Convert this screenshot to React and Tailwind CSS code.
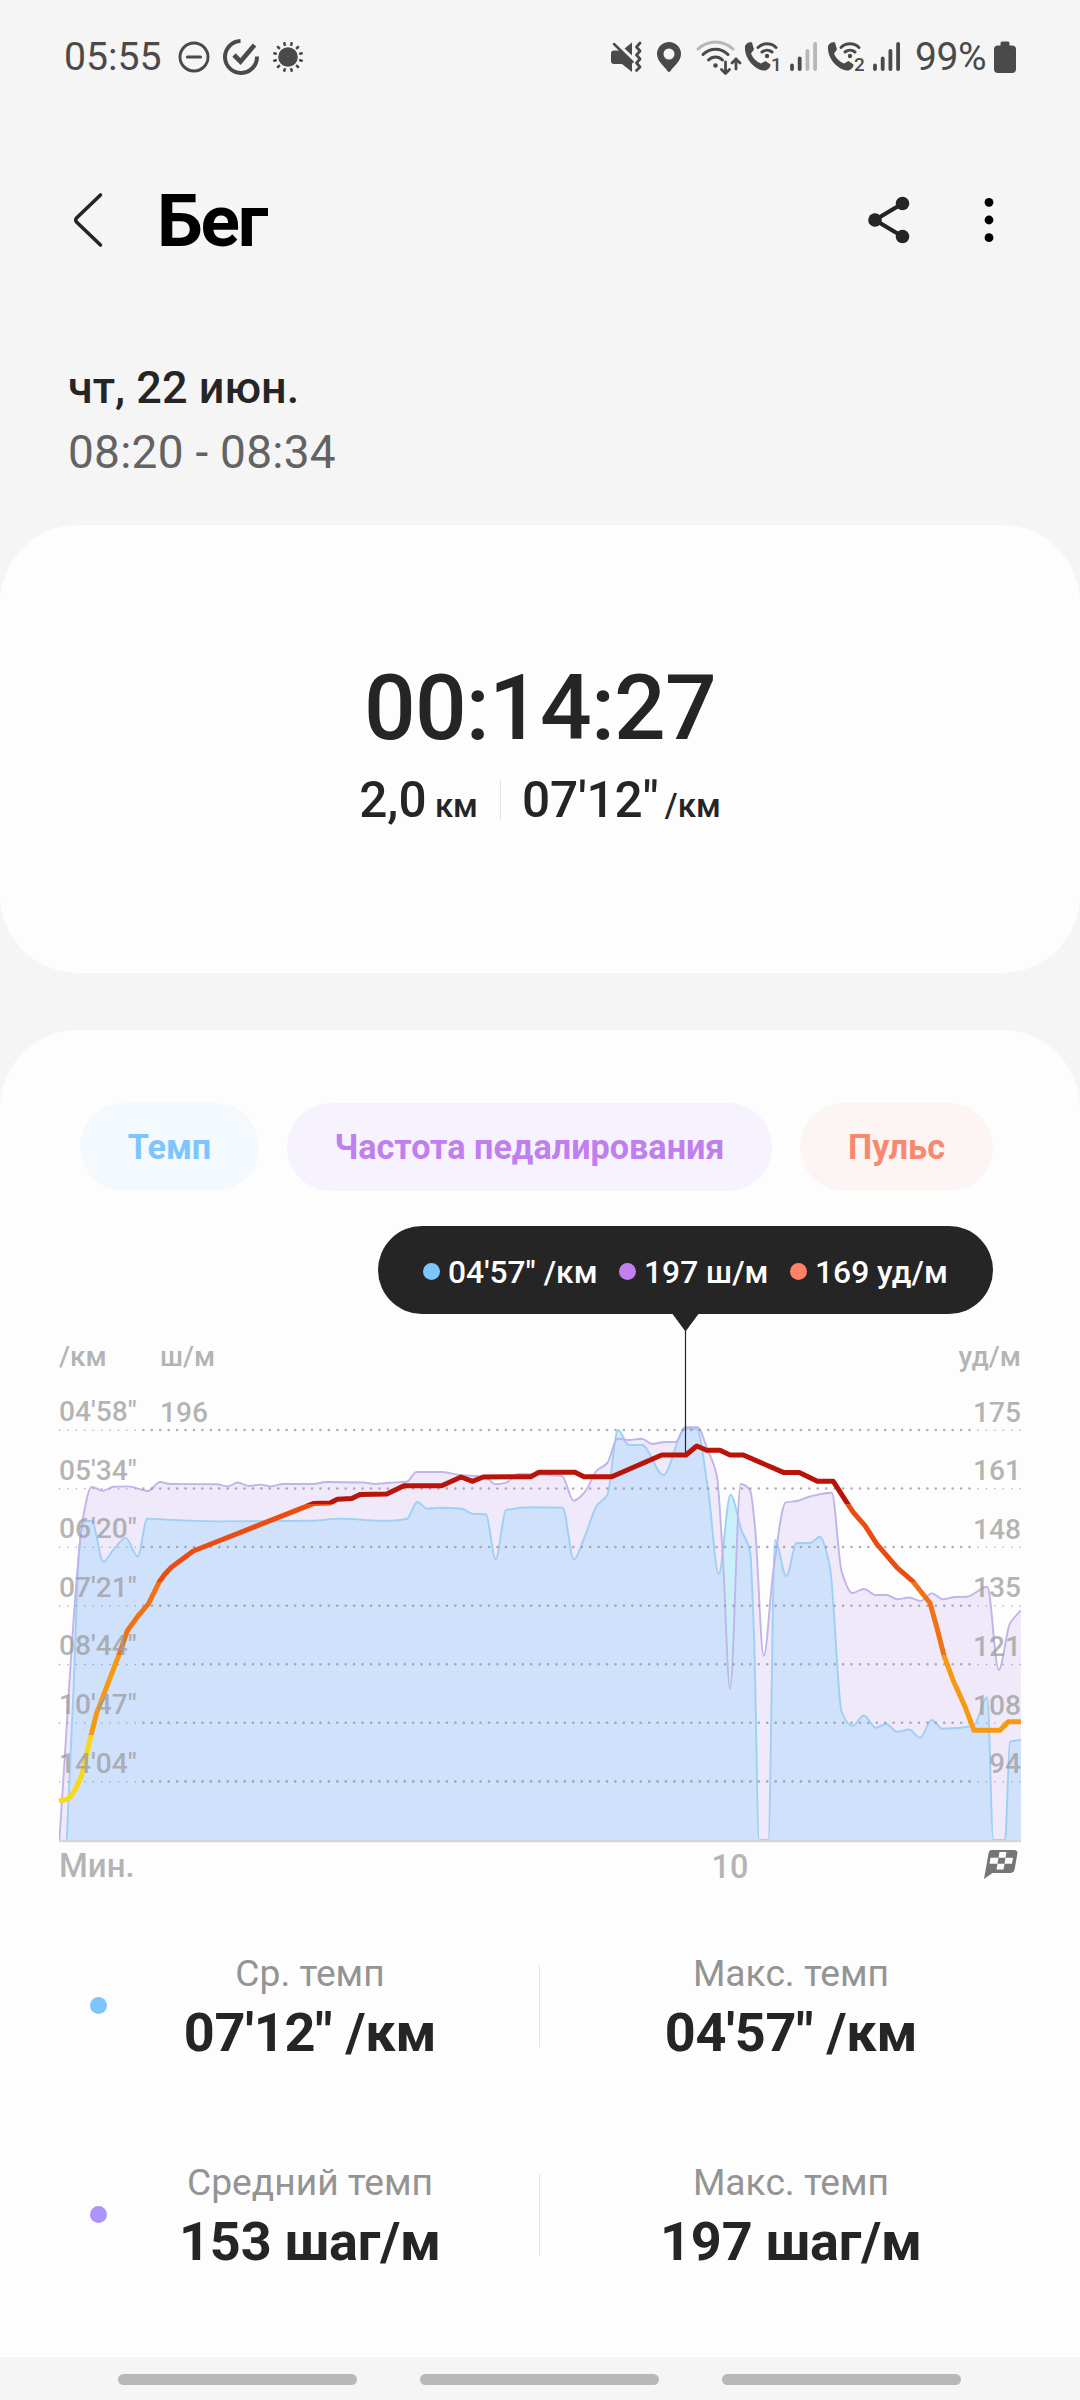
const GRID_Y = [1430, 1488.5, 1547, 1605.7, 1664.3, 1722.8, 1781.4];
const PACE_LABELS = ["04'58\"", "05'34\"", "06'20\"", "07'21\"", "08'44\"", "10'47\"", "14'04\""];
const PULSE_LABELS = ["175", "161", "148", "135", "121", "108", "94"];
const BASE_Y = 1840;

const PACE = [
  [66.7, 1840], [73.3, 1695], [79.3, 1548.6], [83.3, 1521.8], [91.7, 1520.7], [103.3, 1561.8], [113.3, 1550],
  [125.7, 1537.9], [137.7, 1556.4], [147.3, 1518.6], [173.3, 1520], [223, 1521.4], [313, 1520.7], [340, 1518.6],
  [380, 1520.7], [390, 1520.7], [406.7, 1519], [417.3, 1502], [427.3, 1508.7], [440, 1507.7], [461.7, 1508.7],
  [472.7, 1513.7], [485.7, 1514.3], [495.7, 1559.3], [506, 1510], [533, 1507.3], [562.7, 1507.7], [573.7, 1559.3],
  [585, 1536], [596.7, 1505.7], [607.3, 1495], [618, 1430], [628.7, 1445], [642, 1445], [663.3, 1475], [685, 1429],
  [696.7, 1429], [708.3, 1491.7], [718.7, 1574.3], [730.5, 1494.6], [741.7, 1530.9], [750, 1551], [754.3, 1645.6],
  [759, 1840], [768.3, 1840], [775, 1540], [786.3, 1576], [796.7, 1543], [810, 1543], [820, 1536.8], [830, 1567.9],
  [841.7, 1712], [852.3, 1726], [864, 1715.5], [875.7, 1727.7], [886, 1724], [897.3, 1731.8], [909, 1729.5],
  [920, 1737.7], [931.7, 1720], [942.3, 1728.8], [973.3, 1726], [987.3, 1697.4], [993.3, 1840], [1005, 1840],
  [1010, 1741.8], [1021, 1740],
];

const CADENCE = [
  [59.3, 1840], [82.7, 1520], [91.7, 1487], [103.3, 1490.7], [113.3, 1486.8], [128, 1486.4], [148, 1491],
  [160, 1482], [170, 1484], [216.7, 1484.3], [227.7, 1486.4], [237.7, 1482.5], [249, 1486], [260.7, 1484.6],
  [270.7, 1486.4], [283, 1484], [313, 1484], [326.7, 1482], [363, 1482.5], [375, 1484], [390, 1482.7],
  [406.7, 1481.7], [416.7, 1472], [441.7, 1472], [460, 1475], [485, 1477], [495.7, 1484.3], [506, 1482.7],
  [518, 1474], [561.7, 1475.7], [573.7, 1500.7], [585, 1491.7], [596.7, 1470.7], [607.3, 1463], [617.3, 1438.7],
  [628.7, 1440], [641.7, 1438.7], [652, 1444], [665, 1442], [675.7, 1442], [685, 1427.3], [697.3, 1427.3],
  [708.3, 1451.7], [716.7, 1475], [723, 1560], [730, 1689], [740.7, 1484], [750, 1490], [755, 1527],
  [763.7, 1656], [773.3, 1571.6], [785.7, 1502.4], [797.3, 1501], [810, 1496.5], [831.7, 1492.8], [841.7, 1571.6],
  [852.3, 1593], [864, 1589], [875.7, 1595], [886.7, 1595], [897.3, 1599.3], [909, 1597.5], [920.7, 1601],
  [931.7, 1593.4], [943, 1599.3], [955, 1597], [966.7, 1596.7], [987.3, 1586.7], [998.7, 1670], [1010, 1623.4],
  [1021, 1610.4],
];

const PULSE = [
  [59, 1800.4], [65, 1800], [70, 1797.5], [76, 1788], [81.7, 1775.4], [91, 1735.4], [96.7, 1712.9], [119.3, 1654],
  [127.3, 1630.7], [137.7, 1616.4], [148.3, 1604], [159.3, 1581.8], [165, 1574], [171.7, 1567], [193.3, 1551],
  [313.3, 1503.6], [330, 1502.9], [337.3, 1499.3], [351.7, 1498.6], [360, 1494.6], [386.7, 1494], [404, 1485.7],
  [441.7, 1485.7], [461, 1477], [472.7, 1481.3], [483.3, 1477], [530.7, 1476.7], [539, 1472.3], [575, 1472.3],
  [584, 1476.7], [611.7, 1476.7], [661.7, 1455], [686, 1455], [696.7, 1446], [706.7, 1450.3], [720, 1450.3],
  [730, 1455], [743.3, 1455], [783.3, 1472.4], [799.3, 1472.4], [817.3, 1481.3], [833.3, 1481.3], [847.7, 1503.9],
  [853.3, 1512.4], [865, 1525.7], [876.7, 1543.8], [897.3, 1567.9], [912.3, 1580.8], [930, 1603], [936.7, 1627],
  [944.3, 1656.7], [953.3, 1680.7], [965, 1706.6], [974, 1730.3], [1000, 1730.3], [1008.3, 1721.8], [1021, 1721.8],
];

// heart rate zones, from top to bottom of the chart
const ZONES = [
  [1420, 1503.7, "#b81409"],
  [1503.7, 1581.5, "#ea4c12"],
  [1581.5, 1655.5, "#f17216"],
  [1655.5, 1735, "#f59a12"],
  [1735, 1820, "#f7d916"],
];

// monotone cubic curve through the points
function curve(points) {
  const n = points.length;
  const slope = [];
  for (let i = 0; i < n - 1; i++) {
    slope.push((points[i + 1][1] - points[i][1]) / (points[i + 1][0] - points[i][0]));
  }
  const tangent = points.map((_, i) => {
    if (i === 0) return slope[0];
    if (i === n - 1) return slope[n - 2];
    const a = slope[i - 1];
    const b = slope[i];
    return a * b <= 0 ? 0 : (2 * a * b) / (a + b);
  });
  let d = `M${points[0][0]} ${points[0][1]}`;
  for (let i = 0; i < n - 1; i++) {
    const [x0, y0] = points[i];
    const [x1, y1] = points[i + 1];
    const h = (x1 - x0) / 3;
    d += `C${(x0 + h).toFixed(1)} ${(y0 + tangent[i] * h).toFixed(1)} ${(x1 - h).toFixed(1)} ${(y1 - tangent[i + 1] * h).toFixed(1)} ${x1} ${y1}`;
  }
  return d;
}

const area = (points) => `${curve(points)}V${BASE_Y}H${points[0][0]}Z`;

function WifiCall({ sim }) {
  return (
    <svg width="37" height="34" viewBox="0 0 37 34" className="text-[#4a4a4a]">
      <path d="M1 6c1.500-3 4-4.500 7-3.500l2 7-3 4c2 5 6 8.500 10 10l4.500-2.500 5 3.500c0 3-3 6.500-7 6C10 29 0 18 1 6z" fill="currentColor" />
      <g fill="none" stroke="currentColor" strokeWidth="3" strokeLinecap="round">
        <path d="M14 7.500c5-5 13-5 18 0" />
        <path d="M18 12c3-2.500 7-2.500 10 0" />
      </g>
      <circle cx="23" cy="16" r="2.200" fill="currentColor" />
      <text x="27" y="31" fontSize="19" fontWeight="500" fill="currentColor" stroke="#f5f5f5" strokeWidth="3" paintOrder="stroke">
        {sim}
      </text>
    </svg>
  );
}

function Signal({ level }) {
  return (
    <svg width="28" height="34" viewBox="0 0 28 34" fill="none" strokeWidth="3.800" strokeLinecap="round">
      {[25.5, 18.5, 11, 4].map((top, i) => (
        <path key={top} d={`M${2 + i * 7.7} ${top}V29`} stroke={i < level ? "#4a4a4a" : "#b7b7b7"} />
      ))}
    </svg>
  );
}

function StatusBar() {
  return (
    <div className="flex h-28 items-center pl-16 pr-16 pt-px text-[39.2px] text-[#4a4a4a]">
      <span className="pt-0.5">05:55</span>
      <svg width="32" height="32" viewBox="0 0 32 32" className="ml-4" fill="none" stroke="currentColor" strokeWidth="2.900">
        <circle cx="16" cy="16" r="14" />
        <path d="M9.500 16h13" strokeWidth="3.200" strokeLinecap="round" />
      </svg>
      <svg width="38" height="38" viewBox="0 0 38 38" className="ml-3" fill="none" stroke="currentColor" strokeWidth="4">
        <path d="M18.500 3A16 16 0 1 0 35 18.500" />
        <path d="M12 17l6.500 6.500L32.500 7" strokeWidth="4.600" />
      </svg>
      <svg width="32" height="32" viewBox="0 0 32 32" className="ml-3" fill="currentColor">
        <circle cx="16" cy="16" r="9.800" />
        {[15, 45, 75, 105, 135, 165, 195, 225, 255, 285, 315, 345].map((a) => (
          <rect key={a} x="14.700" y="0.600" width="2.600" height="4" rx="1" transform={`rotate(${a} 16 16)`} />
        ))}
      </svg>

      <div className="ml-auto flex items-center">
        <svg width="31" height="32" viewBox="0 0 31 32" fill="currentColor">
          <path d="M13.500 7.500L21 1.500v13zM3 9.500h6L21 21v10l-10-8H3q-3 0-3-3v-7.500q0-3 3-3z" />
          <path d="M3 3l18.500 18" stroke="currentColor" strokeWidth="2.500" strokeLinecap="round" />
          <path d="M29 2l-3.500 4 3.500 4-3.500 4 3.500 4-3.500 4 3.500 4-3.500 3.500" fill="none" stroke="currentColor" strokeWidth="2.800" strokeLinecap="round" strokeLinejoin="round" />
        </svg>
        <svg width="26" height="32" viewBox="0 0 26 32" className="ml-[14px]" fill="currentColor">
          <path fillRule="evenodd" d="M13 1a12 12 0 0 1 12 12c0 7-7 12-10.500 17q-1.500 2-3 0C8 25 1 20 1 13A12 12 0 0 1 13 1zm0 6.500a5.500 5.500 0 1 0 0 11 5.500 5.500 0 0 0 0-11z" />
        </svg>
        <svg width="46" height="36" viewBox="0 0 46 36" className="ml-[14px]" fill="none" stroke="currentColor" strokeWidth="3" strokeLinecap="round">
          <path d="M2 10c10-9.500 25-9.500 35 0" stroke="#b7b7b7" />
          <path d="M7 15.500c7-7 18-7 25 0" />
          <path d="M12.500 21c4-4 10-4 14 0" />
          <circle cx="19.500" cy="26.500" r="2.300" fill="currentColor" stroke="none" />
          <path d="M29.500 23v11M25.500 30.500l4 4 4-4M40 30V20M36 24l4-4 4 4" strokeWidth="2.800" strokeLinejoin="round" />
        </svg>
        <div className="ml-[2px] flex items-center gap-[9px]">
          <WifiCall sim="1" />
          <Signal level={2} />
          <WifiCall sim="2" />
          <Signal level={4} />
        </div>
        <span className="ml-[14px] pt-0.5 text-[39px] leading-none tracking-[-0.5px]">99%</span>
        <svg width="22" height="32" viewBox="0 0 22 32" className="ml-[8px]" fill="currentColor">
          <path d="M6.500 3V2q0-1.500 1.500-1.500h6q1.500 0 1.500 1.500v2.500H18q4 0 4 4V28q0 4-4 4H4q-4 0-4-4V8.500q0-4 4-4h2.500z" />
        </svg>
      </div>
    </div>
  );
}

function Header() {
  return (
    <div className="flex h-[216px] items-center pl-[72px] pr-[83px]">
      <svg width="32" height="56" viewBox="0 0 32 56" fill="none" stroke="#252525" strokeWidth="3.600" strokeLinecap="round" strokeLinejoin="round">
        <path d="M28.500 3L4.500 26q-1.500 2 0 4l24 23" />
      </svg>
      <h1 className="ml-[53px] pt-[3px] text-[73px] font-bold leading-none tracking-[-2.2px] text-black">Бег</h1>
      <svg width="44" height="50" viewBox="0 0 44 50" className="ml-auto" fill="#252525" stroke="#252525">
        <path d="M35.500 8.500L8 25l27.500 16.500" fill="none" strokeWidth="4.200" />
        <g stroke="none">
          <circle cx="35.500" cy="8.500" r="6.800" />
          <circle cx="8" cy="25" r="6.800" />
          <circle cx="35.500" cy="41.500" r="6.800" />
        </g>
      </svg>
      <svg width="16" height="50" viewBox="0 0 16 50" className="ml-[70px]">
        <circle cx="8" cy="7.300" r="4.400" />
        <circle cx="8" cy="25" r="4.400" />
        <circle cx="8" cy="42.700" r="4.400" />
      </svg>
    </div>
  );
}

function Tooltip() {
  return (
    <div className="ml-[378px] mt-[35px] flex h-[88px] w-[615px] items-center rounded-full bg-[#252525] pl-[45px] pt-[3px] text-[31.8px] font-medium text-[#fcfcfc]">
      <i className="size-[17px] rounded-full bg-[#7cc5fd]" />
      <span className="ml-2 w-[171px] whitespace-nowrap pt-[3px]">04'57" /км</span>
      <i className="size-[17px] rounded-full bg-[#c27ff0]" />
      <span className="ml-2 w-[146px] whitespace-nowrap pt-[3px]">197 ш/м</span>
      <i className="size-[17px] rounded-full bg-[#fc836a]" />
      <span className="ml-2 whitespace-nowrap pt-[3px]">169 уд/м</span>
    </div>
  );
}

function Chart() {
  return (
    <svg width="1080" height="577" viewBox="0 1314 1080 577" className="block">
      <defs>
        <linearGradient id="zones" gradientUnits="userSpaceOnUse" x1="0" y1="1420" x2="0" y2="1820">
          {ZONES.flatMap(([from, to, color]) => [
            <stop key={`${color}-a`} offset={(from - 1420) / 400} stopColor={color} />,
            <stop key={`${color}-b`} offset={(to - 1420) / 400} stopColor={color} />,
          ])}
        </linearGradient>
        <clipPath id="plot">
          <rect x="59" y="1400" width="962" height="440" />
        </clipPath>
        <clipPath id="cadence">
          <path d={area(CADENCE)} />
        </clipPath>
      </defs>

      <g clipPath="url(#plot)">
        <path d={area(CADENCE)} fill="#efe9f9" />
        <path d={area(PACE)} fill="#cbeefb" />
        <path d={area(PACE)} fill="#d0e1fc" clipPath="url(#cadence)" />
        <path d={curve(PACE)} fill="none" stroke="#9dd0f4" strokeWidth="1.900" />
        <path d={curve(CADENCE)} fill="none" stroke="#c0b4ea" strokeWidth="1.900" />
      </g>

      {GRID_Y.map((y) => (
        <g key={y} stroke="#8b8b98" strokeOpacity="0.7" strokeLinecap="round" strokeDasharray="0 8.430">
          <path d={`M59.500 ${y + 0.3}H140`} strokeWidth="1.600" />
          <path d={`M143.400 ${y}H975`} strokeWidth="2.600" />
          <path d={`M978 ${y + 0.3}H1021`} strokeWidth="1.600" />
        </g>
      ))}
      <path d="M59 1841H1021" stroke="#d3d5da" strokeWidth="2.400" />

      <path d="M672.500 1314H698.500L685.500 1331.500Z" fill="#252525" />
      <path d="M685.500 1330V1455" stroke="#252525" strokeWidth="1.200" />
      <polyline points={PULSE.join(" ")} fill="none" stroke="url(#zones)" strokeWidth="5" strokeLinejoin="round" />

      <g fontSize="28.200" fontWeight="500" fill="#9c9c9c" fillOpacity="0.75">
        <text x="59" y="1366">/км</text>
        <text x="160" y="1366">ш/м</text>
        <text x="1021" y="1366" textAnchor="end">уд/м</text>
        <text x="160" y="1422">196</text>
        {PACE_LABELS.map((label, i) => (
          <text key={label} x="59" y={1421 + i * 58.6}>{label}</text>
        ))}
        {PULSE_LABELS.map((label, i) => (
          <text key={label} x="1021" y={1421.5 + i * 58.6} textAnchor="end">{label}</text>
        ))}
        <text x="59" y="1877" fontSize="33">Мин.</text>
        <text x="730" y="1877.500" fontSize="32.500" textAnchor="middle">10</text>
      </g>

      {/* finish flag */}
      <path d="M991.500 1850H1014q4 0 3.300 4l-2.600 15q-.700 4-4.500 4H992.500l-8.500 6 4.500-25.500q.600-3.500 3-3.500z" fill="#757575" />
      <path d="M999.500 1852h7l-1 5.700h-7zM990.500 1857.700h8l-1 6h-8zM1005.500 1857.700h7.500l-1 6h-7.500zM997.500 1863.700h7l-1 5.800h-7z" fill="#fcfcfc" />
    </svg>
  );
}

function Stat({ label, value }) {
  return (
    <div className="flex flex-col items-center whitespace-nowrap pt-[3px]">
      <span className="text-[37.2px] leading-[52px] text-[#949494]">{label}</span>
      <span className="text-[54px] font-bold leading-[68px] tracking-[-0.2px] text-[#252525]">{value}</span>
    </div>
  );
}

function StatRow({ color, left, right }) {
  return (
    <div className="grid h-[209px] grid-cols-[17px_406px_53px_450px] items-center pl-[90px]">
      <i className={`size-[17px] rounded-full ${color}`} />
      <Stat {...left} />
      <div className="mx-auto h-[82px] w-px bg-[#e3e3e3]" />
      <Stat {...right} />
    </div>
  );
}

export default function App() {
  return (
    <div className="flex h-[2400px] w-[1080px] flex-col overflow-hidden bg-[#f5f5f5] font-[Roboto,sans-serif] text-[#252525]">
      <StatusBar />
      <Header />

      <div className="h-[197px] pl-[68px] pt-[28px] text-[45px] leading-[64px]">
        <p className="font-medium">чт, 22 июн.</p>
        <p className="text-[46px] tracking-[0.25px] text-[#636363]">08:20 - 08:34</p>
      </div>

      <section className="flex h-[448px] flex-col items-center rounded-[78px] bg-[#fdfdfd] pt-[127px]">
        <p className="text-[91px] font-medium leading-[112px] tracking-[-0.8px]">00:14:27</p>
        <div className="flex h-[72px] items-center font-medium">
          <p className="text-[49.5px]">2,0 <span className="-ml-1 text-[33px]">км</span></p>
          <div className="ml-[22px] mr-[21px] h-10 w-px bg-[#e3e3e3]" />
          <p className="text-[49.5px]">07'12" <span className="-ml-1.5 text-[33px]">/км</span></p>
        </div>
      </section>

      <section className="mt-[57px] h-[1327px] rounded-t-[78px] bg-[#fdfdfd] pt-[73px]">
        <div className="flex h-[88px] gap-7 pl-20 text-[34.2px] font-bold leading-[88px]">
          <button className="w-[179px] rounded-full bg-[#f4f9fd] text-[#7cc5fd]">Темп</button>
          <button className="w-[485px] rounded-full bg-[#f6f2fe] text-[#c07fee]">Частота педалирования</button>
          <button className="w-[193px] rounded-full bg-[#fcf5f4] text-[#fa8870]">Пульс</button>
        </div>
        <Tooltip />
        <Chart />
        <div className="mt-[10px]">
          <StatRow
            color="bg-[#7cc5fd]"
            left={{ label: "Ср. темп", value: "07'12\" /км" }}
            right={{ label: "Макс. темп", value: "04'57\" /км" }}
          />
          <StatRow
            color="bg-[#ad94fb]"
            left={{ label: "Средний темп", value: "153 шаг/м" }}
            right={{ label: "Макс. темп", value: "197 шаг/м" }}
          />
        </div>
      </section>

      <nav className="flex h-[43px] gap-[63px] pl-[118px] pt-[17px]">
        <div className="h-[11px] w-[239px] rounded-full bg-[#b8b8b8]" />
        <div className="h-[11px] w-[239px] rounded-full bg-[#b8b8b8]" />
        <div className="h-[11px] w-[239px] rounded-full bg-[#b8b8b8]" />
      </nav>
    </div>
  );
}
